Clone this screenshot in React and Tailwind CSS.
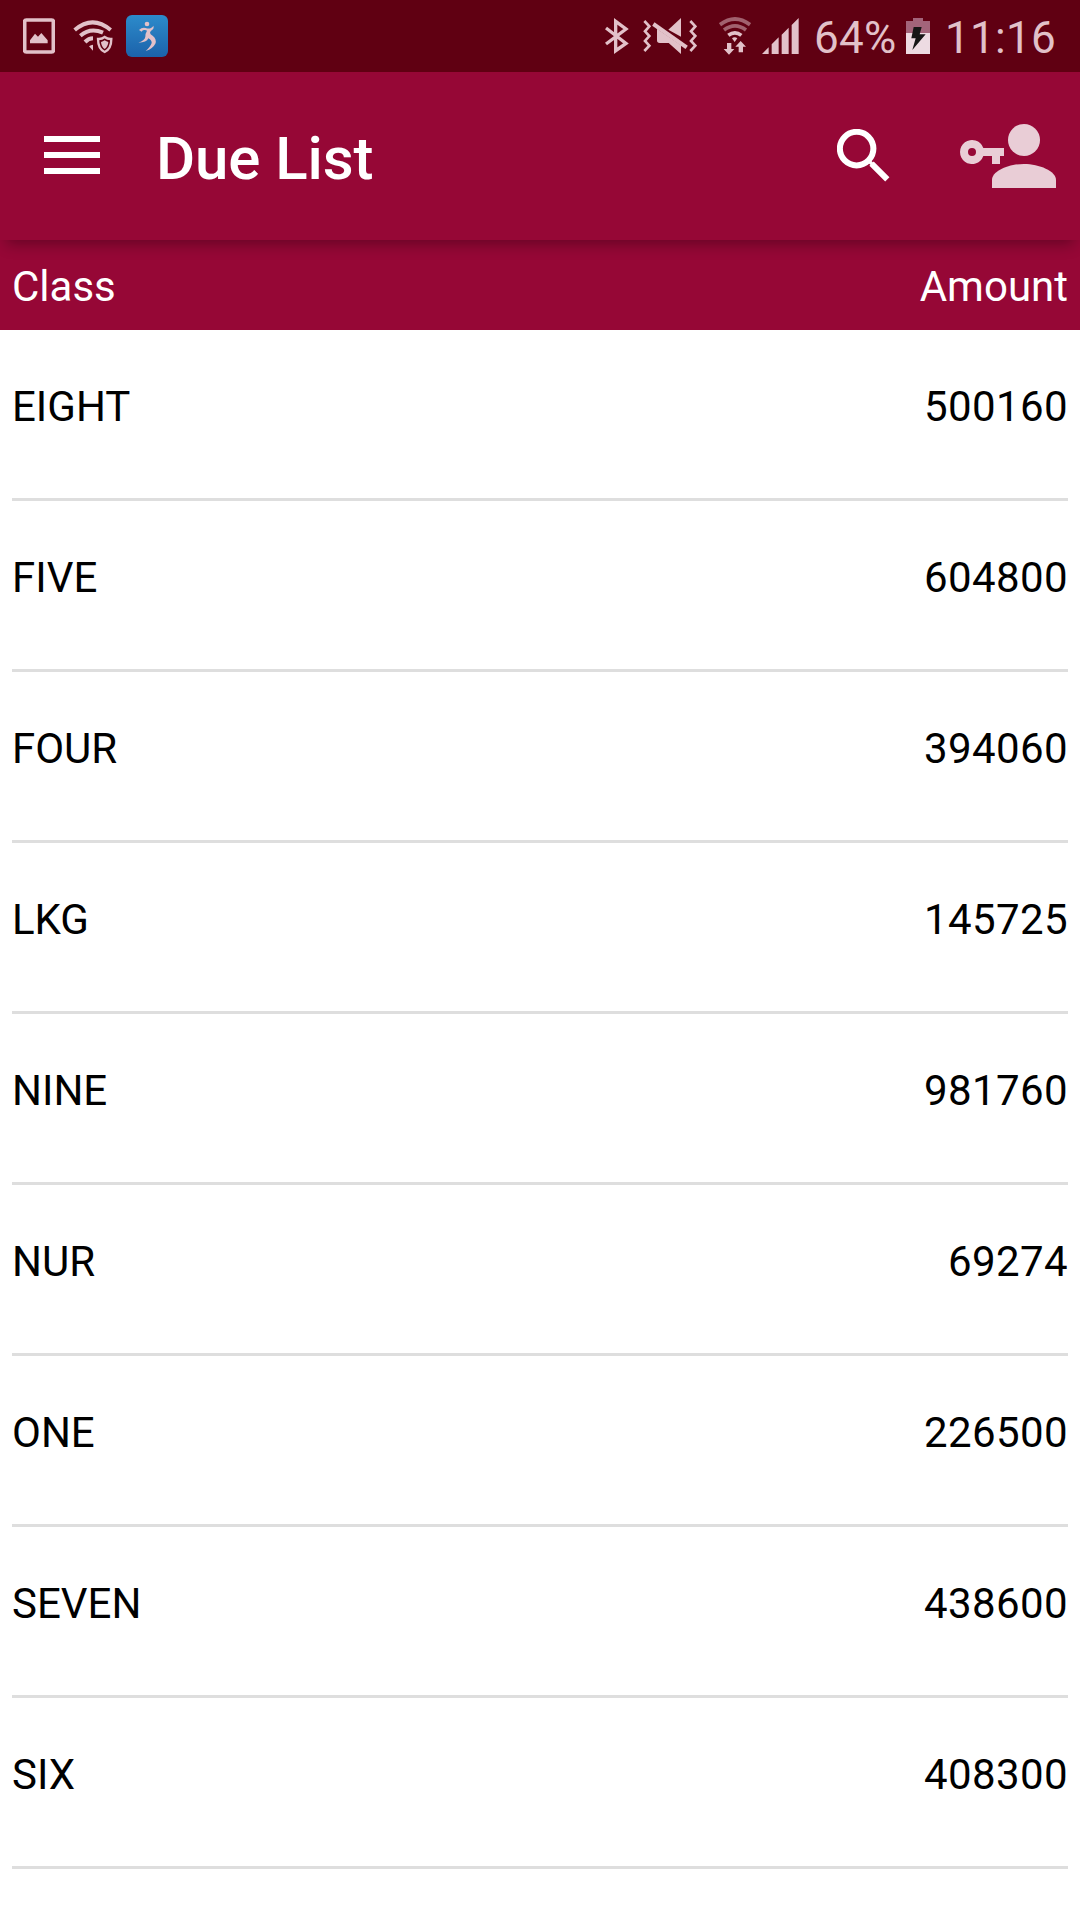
const DUES = [
  { name: 'EIGHT', amount: 500160 },
  { name: 'FIVE', amount: 604800 },
  { name: 'FOUR', amount: 394060 },
  { name: 'LKG', amount: 145725 },
  { name: 'NINE', amount: 981760 },
  { name: 'NUR', amount: 69274 },
  { name: 'ONE', amount: 226500 },
  { name: 'SEVEN', amount: 438600 },
  { name: 'SIX', amount: 408300 },
];

function PictureIcon() {
  return (
    <svg className="w-8 h-9" viewBox="69 55 96 108" fill="currentColor">
      <rect x="74" y="61" width="86" height="96" rx="5" fill="none" stroke="currentColor" strokeWidth="11" />
      <path d="M90 131v-9l15-20 9 9 10-11 19 22v9z" />
    </svg>
  );
}

function WifiSecureIcon() {
  return (
    <svg className="w-10 h-9" viewBox="219 55 120 108" fill="none" stroke="currentColor">
      <path d="M224 91Q278 45 332 91" strokeWidth="12" />
      <path d="M241 108Q271 82 309 99" strokeWidth="12" />
      <path d="M255 127Q266 116 279 116" strokeWidth="12" />
      <path d="M267 140q6-5 12-5v18z" fill="currentColor" stroke="none" />
      <path d="M314 112q9 7 20 6 0 30-20 39-20-9-20-39 11 1 20-6z" strokeWidth="7" />
      <path d="M314 122q5 4 11 5-1 14-11 21-10-7-11-21 6-1 11-5z" fill="currentColor" stroke="none" />
    </svg>
  );
}

function RunnerIcon() {
  return (
    <svg className="w-[42px] h-[42px]" viewBox="378 45 126 126">
      <defs>
        <linearGradient id="runner" x1="0" y1="0" x2="0" y2="1">
          <stop offset="0" stopColor="#2c8bcb" />
          <stop offset="1" stopColor="#1c62aa" />
        </linearGradient>
      </defs>
      <rect x="378" y="45" width="126" height="126" rx="18" fill="url(#runner)" />
      <g fill="currentColor">
        <circle cx="441" cy="72" r="7" />
        <path d="M417 90q9-9 20-6 9 3 16 0 5-3 7-7 3 8-4 13-5 3-6 8 0 4 8 9 13 10 8 24-7 14-29 22 15-13 18-24 1-8-10-14-5 13-30 13 20-7 21-18 0-10 5-18-4-3-9-2-5 1-7 5z" />
      </g>
    </svg>
  );
}

function BluetoothIcon() {
  return (
    <svg className="w-6 h-9" viewBox="44 54 72 108" fill="none" stroke="currentColor" strokeWidth="10">
      <path d="M47 84l60 46-31 22V64l31 23-60 45" />
    </svg>
  );
}

function VibrateIcon() {
  return (
    <svg className="w-[54px] h-9" viewBox="159 54 162 108" fill="none" stroke="currentColor">
      <path d="M163 63l15 16-13 15 13 14-13 15 13 14-15 16" strokeWidth="8" />
      <path d="M301 63l15 16-13 15 13 14-13 15 13 14-15 16" strokeWidth="8" />
      <path d="M273 54v56l-38-21z" fill="currentColor" stroke="none" />
      <path d="M201 86l72 50v26l-37-33h-27q-8 0-8-8z" fill="currentColor" stroke="none" />
      <path d="M190 72L290 142" strokeWidth="12" />
    </svg>
  );
}

function WifiTransferIcon() {
  return (
    <svg className="w-8 h-[38px]" viewBox="386 50 96 114" fill="none" stroke="currentColor">
      <g opacity="0.5">
        <path d="M389 73Q434 39 479 73" strokeWidth="11" />
        <path d="M401 89Q434 64 467 89" strokeWidth="11" />
      </g>
      <path d="M414 105Q434 90 453 105" strokeWidth="11" />
      <path d="M425 114q8-6 16 0l-8 11z" fill="currentColor" stroke="none" />
      <path d="M410 128h13v18h9l-16 17-16-17h10zM445 156h13v-17h9l-16-17-16 17h10z" fill="currentColor" stroke="none" />
    </svg>
  );
}

function SignalIcon() {
  return (
    <svg className="w-[37px] h-9" viewBox="517 54 111 108" fill="currentColor">
      <path d="M517 162l20-20v20zM546 162v-29l21-21v50zM576 162v-58l21-21v79zM606 162V75l21-21v108z" />
    </svg>
  );
}

function BatteryIcon() {
  return (
    <svg className="w-6 h-9" viewBox="318 54 72 108">
      <path d="M318 63h21v-9h30v9h21v37h-72z" fill="#a3647a" />
      <path d="M318 99h72v63h-72z" fill="#eddbe2" />
      <path d="M341 81h24l-6 22h18l-40 47 10-35h-13z" fill="#161616" />
    </svg>
  );
}

function StatusBar() {
  return (
    <div className="flex h-18 items-center justify-between bg-[#600012] px-[23px] text-[#e2c1c9]">
      <div className="flex items-center">
        <PictureIcon />
        <div className="ml-[18px]"><WifiSecureIcon /></div>
        <div className="ml-[13px]"><RunnerIcon /></div>
      </div>
      <div className="flex items-center text-[44px] leading-none tracking-[0.3px]">
        <BluetoothIcon />
        <div className="ml-[14px]"><VibrateIcon /></div>
        <div className="ml-[22px]"><WifiTransferIcon /></div>
        <div className="ml-[11px]"><SignalIcon /></div>
        <span className="ml-[15px] mt-[3px] w-[92px] whitespace-nowrap">64%</span>
        <BatteryIcon />
        <span className="ml-[15px] mt-[3px] w-[112px] whitespace-nowrap">11:16</span>
      </div>
    </div>
  );
}

function Toolbar() {
  return (
    <header className="relative z-10 flex h-[168px] items-center bg-[#960736] pl-11 pr-6 text-white shadow-[0_10px_14px_-6px_rgba(0,0,0,0.32)]">
      <svg className="mt-[-2px] h-[38px] w-14" viewBox="0 0 56 38" fill="currentColor">
        <path d="M0 0h56v6H0zM0 16h56v6H0zM0 32h56v6H0z" />
      </svg>
      <h1 className="ml-14 mt-[5px] flex-1 text-[60px] font-medium leading-none tracking-[-0.1px]">Due List</h1>
      <svg className="mt-[-1px] h-[53px] w-[53px]" viewBox="111 117 158 158" fill="none" stroke="currentColor">
        <circle cx="169.500" cy="175.500" r="50" strokeWidth="18" />
        <path d="M208 214l8 8" strokeWidth="10" />
        <path d="M214 220l47 47" strokeWidth="18" />
      </svg>
      <svg className="ml-[70px] h-16 w-24" viewBox="480 102 288 192" fill="#e9cdd6">
        <circle cx="672" cy="150" r="48" />
        <path d="M576 294v-24c0-27 50-48 96-48s96 21 96 48v24z" />
        <path fillRule="evenodd" d="M550 174h62v24h-12v24h-24v-24h-26a36 36 0 1 1 0-24zM516 174a12 12 0 1 0 0 24 12 12 0 1 0 0-24z" />
      </svg>
    </header>
  );
}

export default function App() {
  return (
    <div className="flex h-[1920px] w-[1080px] flex-col overflow-hidden bg-white font-[Roboto,sans-serif]">
      <StatusBar />
      <Toolbar />
      <div className="flex h-[90px] items-center justify-between bg-[#960736] px-3 pt-[3px] text-[42px] leading-none text-white">
        <span>Class</span>
        <span>Amount</span>
      </div>
      <ul className="px-3 text-[42px] leading-none text-black">
        {DUES.map(due => (
          <li key={due.name} className="flex h-[171px] items-center justify-between border-b-3 border-[#dedede] pb-[15px]">
            <span>{due.name}</span>
            <span className="tracking-[0.4px]">{due.amount}</span>
          </li>
        ))}
      </ul>
    </div>
  );
}
